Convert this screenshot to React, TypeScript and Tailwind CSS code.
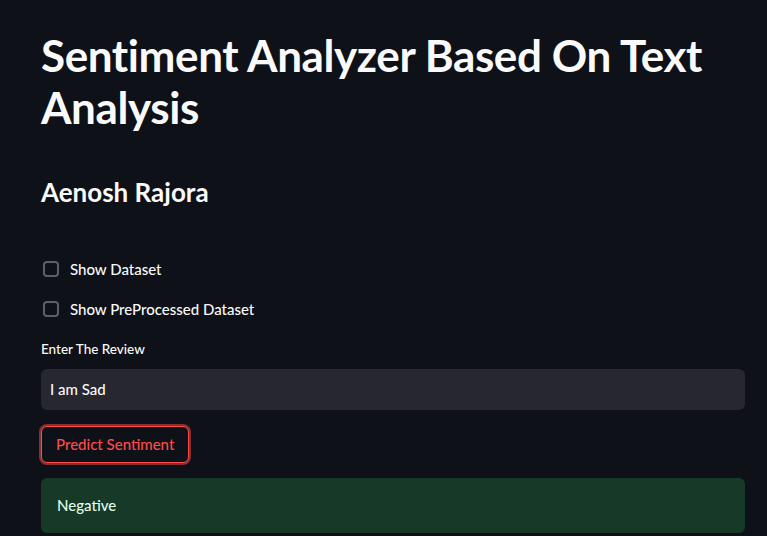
export default function App() {
  return (
    <div className="min-h-[536px] w-full bg-[#0e1117] text-[#fafafa]" style={{ fontFamily: 'Lato, "Noto Sans", sans-serif' }}>
      <div className="flex flex-col px-[41px] pt-[29px] pr-[22px]">
        <h1 className="text-[44px] font-bold leading-[52px] tracking-[-0.4px]">Sentiment Analyzer Based On Text Analysis</h1>
        <h3 className="mt-[41px] text-[26px] font-bold leading-[36px]">Aenosh Rajora</h3>
        <div className="mt-[47px] flex items-center gap-[11px] h-[24px]">
          <span className="ml-[2px] h-[16px] w-[16px] rounded-[4px] border-2 border-[#5c5f66]" />
          <span className="text-[15px] font-medium">Show Dataset</span>
        </div>
        <div className="mt-[16px] flex items-center gap-[11px] h-[24px]">
          <span className="ml-[2px] h-[16px] w-[16px] rounded-[4px] border-2 border-[#5c5f66]" />
          <span className="text-[15px] font-medium">Show PreProcessed Dataset</span>
        </div>
        <label className="mt-[19px] text-[13.5px] leading-[18px] font-medium">Enter The Review</label>
        <div className="mt-[11px] flex h-[41px] items-center rounded-[6px] bg-[#262730] px-[9px] text-[15px] font-medium">I am Sad</div>
        <div className="mt-[16px]">
          <button className="rounded-[6px] border border-[#ff4b4b] px-[14px] h-[37px] text-[15px] font-medium text-[#ff4b4b] shadow-[0_0_0_2px_rgba(255,75,75,0.5)] bg-[#0e1117]">Predict Sentiment</button>
        </div>
        <div className="mt-[15px] flex h-[55px] items-center rounded-[6px] bg-[#173928] px-[16px] text-[15px] font-medium text-[#dffde9]">Negative</div>
      </div>
    </div>
  );
}
